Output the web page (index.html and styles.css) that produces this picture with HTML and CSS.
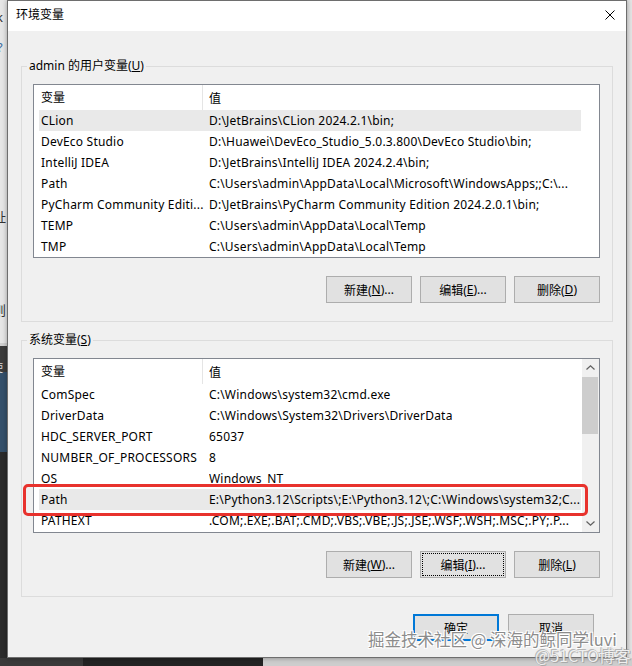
FILE: index.html
```html
<!DOCTYPE html>
<html lang="zh-CN">
<head>
<meta charset="utf-8">
<title>环境变量</title>
<link rel="stylesheet" href="styles.css">
</head>
<body>
<div class="desktop">
  <div class="frag frag-k">k</div>
  <div class="frag frag-q">?</div>
  <div class="frag frag-zhi">址</div>
  <div class="frag frag-ze">则</div>
  <div class="frag frag-shi">使</div>

  <div class="dialog">
    <div class="titlebar">
      <span class="title">环境变量</span>
      <svg class="close" width="10" height="10" viewBox="0 0 10 10"><path d="M0.5 0.5 L9.5 9.5 M9.5 0.5 L0.5 9.5" stroke="#000" stroke-width="1" fill="none"/></svg>
    </div>
    <div class="content">
      <fieldset class="group group-user">
        <legend>admin 的用户变量(<u>U</u>)</legend>
        <div class="list">
          <div class="lv-main">
            <div class="lv-head"><div class="h-name">变量</div><div class="h-val">值</div></div>
            <div class="row sel"><div class="n">CLion</div><div class="v">D:\JetBrains\CLion 2024.2.1\bin;</div></div>
            <div class="row"><div class="n">DevEco Studio</div><div class="v">D:\Huawei\DevEco_Studio_5.0.3.800\DevEco Studio\bin;</div></div>
            <div class="row"><div class="n">IntelliJ IDEA</div><div class="v">D:\JetBrains\IntelliJ IDEA 2024.2.4\bin;</div></div>
            <div class="row"><div class="n">Path</div><div class="v">C:\Users\admin\AppData\Local\Microsoft\WindowsApps;;C:\...</div></div>
            <div class="row"><div class="n">PyCharm Community Editi...</div><div class="v">D:\JetBrains\PyCharm Community Edition 2024.2.0.1\bin;</div></div>
            <div class="row"><div class="n">TEMP</div><div class="v">C:\Users\admin\AppData\Local\Temp</div></div>
            <div class="row"><div class="n">TMP</div><div class="v">C:\Users\admin\AppData\Local\Temp</div></div>
          </div>
        </div>
        <div class="btns">
          <div class="btn">新建(<u>N</u>)...</div>
          <div class="btn">编辑(<u>E</u>)...</div>
          <div class="btn">删除(<u>D</u>)</div>
        </div>
      </fieldset>

      <fieldset class="group group-sys">
        <legend>系统变量(<u>S</u>)</legend>
        <div class="list list-sys">
          <div class="lv-main">
            <div class="lv-head"><div class="h-name">变量</div><div class="h-val">值</div></div>
            <div class="row"><div class="n">ComSpec</div><div class="v">C:\Windows\system32\cmd.exe</div></div>
            <div class="row"><div class="n">DriverData</div><div class="v">C:\Windows\System32\Drivers\DriverData</div></div>
            <div class="row"><div class="n">HDC_SERVER_PORT</div><div class="v">65037</div></div>
            <div class="row"><div class="n">NUMBER_OF_PROCESSORS</div><div class="v">8</div></div>
            <div class="row"><div class="n">OS</div><div class="v">Windows_NT</div></div>
            <div class="row sel mark"><div class="n">Path</div><div class="v">E:\Python3.12\Scripts\;E:\Python3.12\;C:\Windows\system32;C...</div><span class="redbox"></span></div>
            <div class="row"><div class="n">PATHEXT</div><div class="v">.COM;.EXE;.BAT;.CMD;.VBS;.VBE;.JS;.JSE;.WSF;.WSH;.MSC;.PY;.P...</div></div>
          </div>
          <div class="scrollbar">
            <div class="sb-btn"><svg width="9" height="5" viewBox="0 0 9 5"><path d="M0.5 4.5 L4.5 0.8 L8.5 4.5" stroke="#606060" stroke-width="1.2" fill="none"/></svg></div>
            <div class="sb-track"><div class="sb-thumb"></div></div>
            <div class="sb-btn"><svg width="9" height="5" viewBox="0 0 9 5"><path d="M0.5 0.5 L4.5 4.2 L8.5 0.5" stroke="#606060" stroke-width="1.2" fill="none"/></svg></div>
          </div>
        </div>
        <div class="btns">
          <div class="btn">新建(<u>W</u>)...</div>
          <div class="btn focus">编辑(<u>I</u>)...</div>
          <div class="btn">删除(<u>L</u>)</div>
        </div>
      </fieldset>

      <div class="footer">
        <div class="btn default">确定</div>
        <div class="btn">取消</div>
      </div>
    </div>
  </div>

  <div class="watermark">掘金技术社区 @ 深海的鲸同学luvi</div>
  <div class="watermark2">@51CTO博客</div>
</div>
</body>
</html>
```

FILE: styles.css
```css
* { box-sizing: border-box; }
html, body { margin: 0; padding: 0; }
body {
  width: 632px;
  height: 666px;
  overflow: hidden;
  font-family: "Noto Sans", "Noto Sans CJK SC", sans-serif;
  font-size: 12px;
  color: #000;
}
.desktop {
  position: relative;
  width: 632px;
  height: 666px;
  overflow: hidden;
  background:
    linear-gradient(to right, #3a3a3a 0 83px, #232323 83px 263px, #cdcdcd 263px) left bottom / 632px 8px no-repeat,
    linear-gradient(to bottom, #e6e6e6 0 343px, #d0d0d0 343px 346px, #3c3c3c 346px 372px, #34506b 372px 452px, #2b2b2b 452px) left top / 8px 666px no-repeat,
    #e4e4e4;
}
.frag {
  position: absolute;
  left: -6px;
  font-size: 13px;
  line-height: 14px;
  color: #333;
}
.frag-k { top: 10px; left: -4px; }
.frag-q { top: 40px; left: -3px; color: #3a6aa0; }
.frag-zhi { top: 210px; left: -7px; }
.frag-ze { top: 303px; left: -7px; }
.frag-shi { top: 361px; left: -8px; font-size: 11px; color: #ddd; }

.dialog {
  position: absolute;
  left: 7px;
  top: 0;
  width: 620px;
  height: 658px;
  border: 1px solid #6e6e6e;
  background: #f0f0f0;
  box-shadow: 0 0 5px rgba(0, 0, 0, 0.35);
  display: flex;
  flex-direction: column;
}
.titlebar {
  height: 30px;
  flex: none;
  background: #fff;
  display: flex;
  align-items: center;
  padding-left: 8px;
}
.title { line-height: 16px; margin-top: -2px; }
.close { margin-left: auto; margin-right: 11px; margin-top: -2px; }

.content {
  padding: 0 13px;
  display: flex;
  flex-direction: column;
}
.group {
  margin: 0;
  border: 1px solid #dcdcdc;
  padding: 10px 12px 18px 11px;
  min-width: 0;
}
.group legend {
  padding: 0 2px;
  margin-left: -6px;
  line-height: 16px;
  height: 16px;
}
.group-user { margin-top: 27px; }
.group-sys { margin-top: 10px; }

.list {
  height: 174px;
  border: 1px solid #828790;
  background: #fff;
  display: flex;
}
.list-sys { height: 175px; }
.lv-main {
  flex: 1;
  min-width: 0;
}
.lv-head {
  height: 25px;
  display: flex;
  align-items: center;
}
.h-name {
  width: 169px;
  height: 25px;
  line-height: 25px;
  padding-left: 7px;
  border-right: 1px solid #e5e5e5;
}
.h-val { padding-left: 6px; }
.row {
  position: relative;
  height: 21px;
  width: 542px;
  margin-left: 5px;
  display: flex;
  align-items: center;
  white-space: nowrap;
  letter-spacing: 0.2px;
}
.row.sel { background: #e9e9e9; }
.n { width: 170px; padding-left: 2px; flex: none; overflow: hidden; }
.v { flex: 1; min-width: 0; overflow: hidden; }
.redbox {
  position: absolute;
  left: -16px;
  top: -5px;
  width: 565px;
  height: 32px;
  border: 3px solid #e8322d;
  border-radius: 5px;
}

.scrollbar {
  width: 17px;
  flex: none;
  background: #f0f0f0;
  display: flex;
  flex-direction: column;
}
.sb-btn {
  height: 17px;
  display: flex;
  align-items: center;
  justify-content: center;
}
.sb-track { flex: 1; padding: 1px 1px 0 0; }
.sb-thumb { height: 57px; background: #cdcdcd; }

.btns {
  margin-top: 18px;
  display: flex;
  justify-content: flex-end;
  gap: 8px;
}
.btn {
  width: 86px;
  height: 27px;
  border: 1px solid #adadad;
  background: #e1e1e1;
  display: flex;
  align-items: center;
  justify-content: center;
  white-space: nowrap;
}
.btn.focus { outline: 1px dotted #000; outline-offset: -3px; }
.btn.default { border: 2px solid #0078d7; }
.footer {
  margin-top: 17px;
  display: flex;
  justify-content: flex-end;
  gap: 9px;
  padding-right: 19px;
}

.watermark {
  position: absolute;
  left: 368px;
  top: 630px;
  font-family: "Noto Sans CJK SC", sans-serif;
  font-size: 16.5px;
  line-height: 19px;
  color: #8c8c8c;
  text-shadow: 0 0 1px #fff, 1px 1px 0 #fff, -1px -1px 0 #fff, 1px -1px 0 #fff, -1px 1px 0 #fff;
  white-space: nowrap;
}
.watermark2 {
  position: absolute;
  left: 535px;
  top: 646px;
  font-family: "Noto Sans CJK SC", sans-serif;
  font-size: 16px;
  line-height: 18px;
  color: rgba(255, 255, 255, 0.85);
  text-shadow: 0 0 1px #999, 1px 1px 0 rgba(150,150,150,.6), -1px -1px 0 rgba(150,150,150,.6);
  white-space: nowrap;
}
```
